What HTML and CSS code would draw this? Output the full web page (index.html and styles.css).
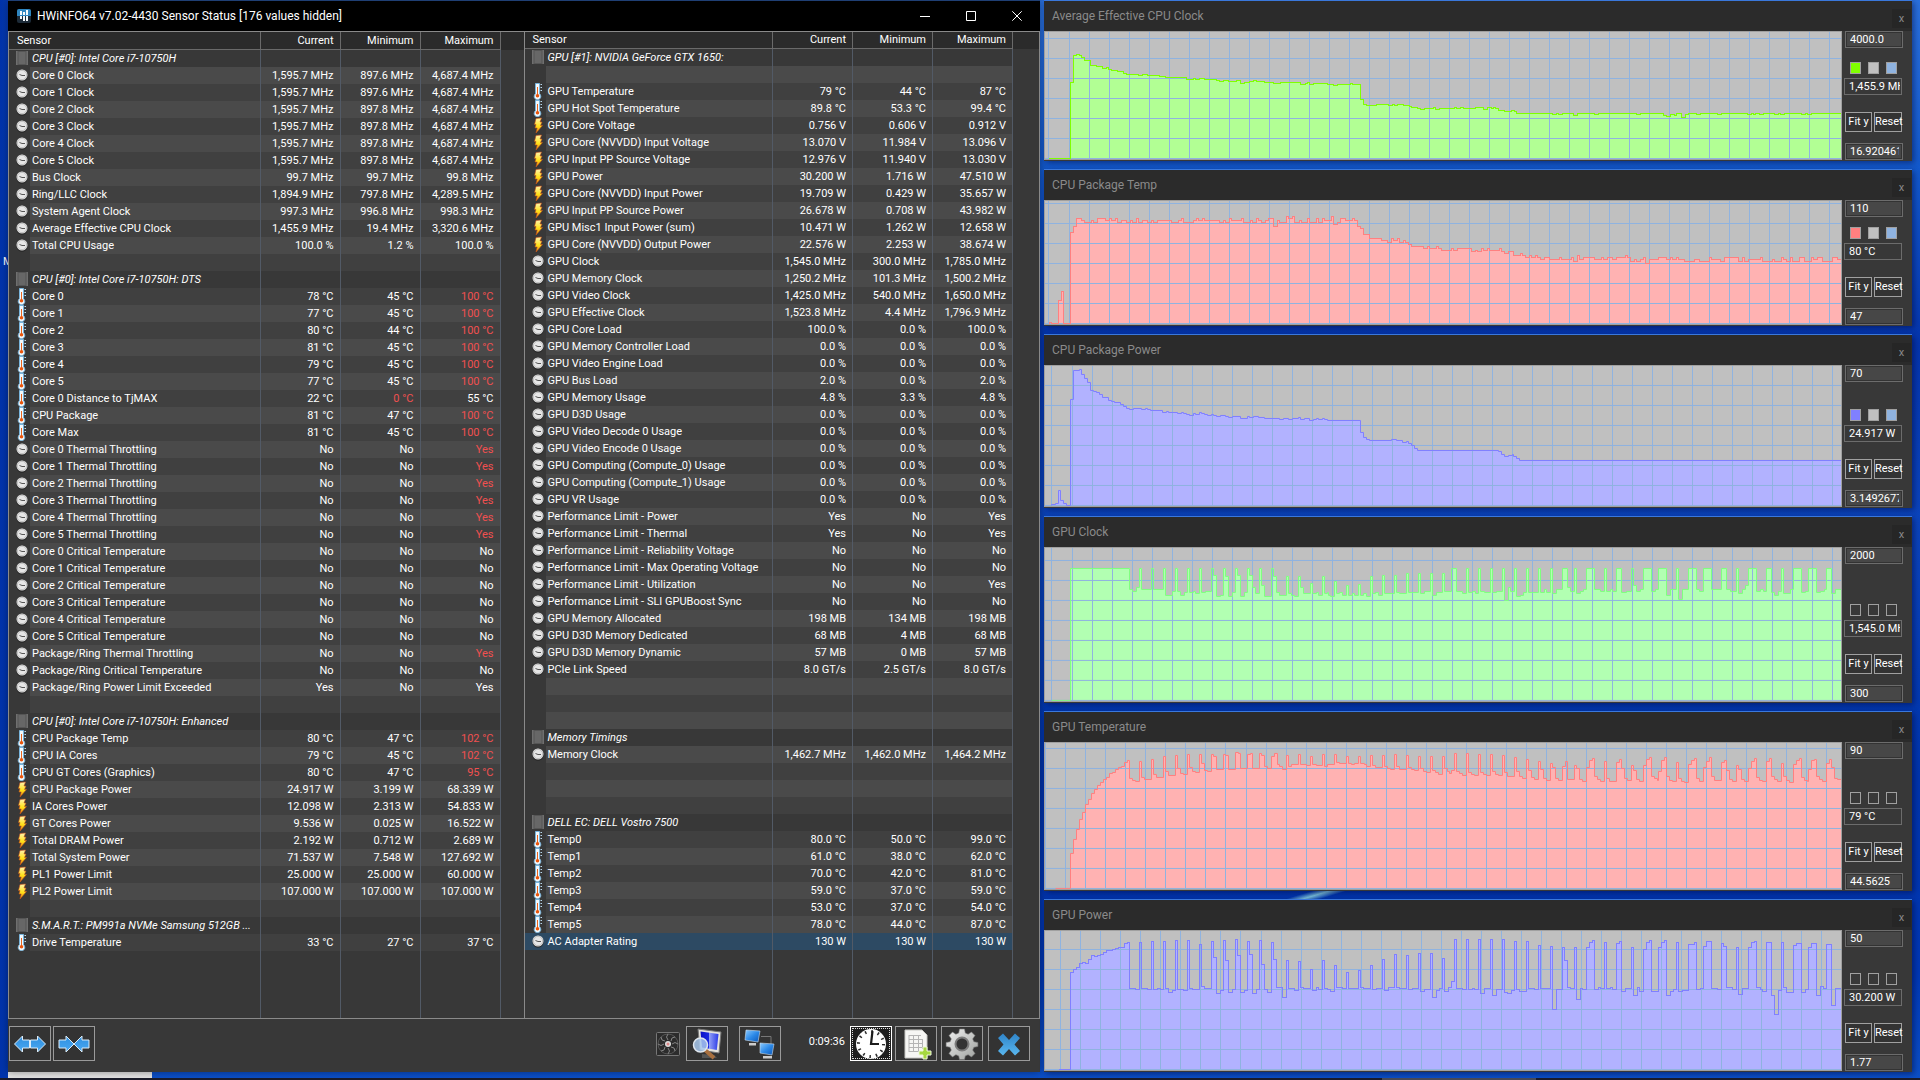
FILE: index.html
```html
<!DOCTYPE html>
<html lang="en">
<head>
<meta charset="utf-8">
<meta name="viewport" content="width=device-width, initial-scale=1">
<title>HWiNFO64 v7.02-4430 Sensor Status</title>
<link rel="stylesheet" href="styles.css">
</head>
<body>
<svg class="sprite" aria-hidden="true">
  <defs>
    <linearGradient id="gArrow" x1="0" y1="0" x2="0" y2="1"><stop offset="0" stop-color="#2f8fe0"/><stop offset="1" stop-color="#4aa9f2"/></linearGradient>
    <linearGradient id="gScreen" x1="0" y1="0" x2="1" y2="0"><stop offset="0" stop-color="#0a10c8"/><stop offset=".45" stop-color="#1a2ae0"/><stop offset=".5" stop-color="#8f9cf5"/><stop offset="1" stop-color="#2a3ae8"/></linearGradient>
    <linearGradient id="gMon" x1="0" y1="0" x2="1" y2="1"><stop offset="0" stop-color="#8ccbff"/><stop offset=".5" stop-color="#2d8ae8"/><stop offset="1" stop-color="#0a55b8"/></linearGradient>
    <linearGradient id="gGear" x1="0" y1="0" x2="1" y2="1"><stop offset="0" stop-color="#f2f2f2"/><stop offset="1" stop-color="#9c9f9c"/></linearGradient>
    <linearGradient id="gBolt" x1="0" y1="0" x2="0" y2="1"><stop offset="0" stop-color="#fff3b0"/><stop offset=".55" stop-color="#ffe21a"/><stop offset="1" stop-color="#f08a10"/></linearGradient>
    <linearGradient id="gX" x1="0" y1="0" x2="0" y2="1"><stop offset="0" stop-color="#2f84c8"/><stop offset="1" stop-color="#5ab8f0"/></linearGradient>
  </defs>
  <symbol id="i-clock" viewBox="0 0 14 17">
    <circle cx="7" cy="9" r="5.500" fill="#1c1c1c"/><circle cx="7" cy="8" r="5.500" fill="#e6e6e6"/><circle cx="7" cy="8" r="4.700" fill="none" stroke="#b4b4b4" stroke-width=".8"/>
    <path d="M4.500 7.500L7 8.500H10" fill="none" stroke="#555" stroke-width="1"/>
  </symbol>
  <symbol id="i-temp" viewBox="0 0 14 17">
    <path d="M4.500.500h4v10.300a3.300 3.300 0 1 1-4 0z" fill="#f2f9fd" stroke="#78b4dc"/>
    <path d="M9.500 1.500h1.500M9.500 4.500h1.500M9.500 7.500h1.500" stroke="#b8d8ee"/>
    <rect x="6" y="4" width="1" height="8" fill="#e8641e"/><circle cx="6.500" cy="12.700" r="1.800" fill="#e8560e"/>
  </symbol>
  <symbol id="i-bolt" viewBox="0 0 14 17">
    <path d="M5 1.500L10.500 1 9 5h2L9.500 8.500h2L5 16l1.200-5H4l1-3.500H3.500z" fill="url(#gBolt)" stroke="#c8501a" stroke-width=".6"/>
  </symbol>
  <symbol id="i-chip" viewBox="0 0 14 17">
    <path d="M2 1.500v13M12 1.500v13" stroke="#a5a5a5" stroke-width="2" stroke-dasharray="1 1"/>
    <rect x="3" y="1.500" width="8" height="13" fill="#676767" stroke="#555"/>
  </symbol>
</svg>
<div class="desktop">
  <span class="desk-label">M</span>
  <main class="windows">
    <section class="hwinfo" aria-label="Sensor status">
      <header class="titlebar">
        <svg class="app-icon" viewBox="0 0 14 14" aria-hidden="true"><rect width="14" height="14" rx="2" fill="#1d2b38"/><path d="M0 2a2 2 0 0 1 2-2h10a2 2 0 0 1 2 2v5H0z" fill="#2f86c0"/><path d="M3 2h2v4H3zM6 3h2v3H6zM9 1h2v5H9zM3 7h2v3H3zM6 7h2v5H6zM9 7h2v5H9z" fill="#f4f8fb"/></svg>
        <h1>HWiNFO64 v7.02-4430 Sensor Status [176 values hidden]</h1>
        <button class="cap" aria-label="Minimize"><svg viewBox="0 0 10 10"><path d="M0 5.500h10"/></svg></button>
        <button class="cap" aria-label="Maximize"><svg viewBox="0 0 10 10"><path d="M.5.500h9v9h-9z"/></svg></button>
        <button class="cap" aria-label="Close"><svg viewBox="0 0 10 10"><path d="M.3.300l9.400 9.400M9.700.300L.3 9.700"/></svg></button>
      </header>
      <div class="panes">
        <div class="pane pane-a"><table id="sensorsA"></table></div>
        <div class="pane pane-b"><table id="sensorsB"></table></div>
      </div>
      <footer class="toolbar">
        <div class="tools near">
          <button aria-label="Widen columns"><svg viewBox="0 0 34 20"><path d="M1.500 10l8-8v4h7v8h-7v4zM32.500 10l-8-8v4h-7v8h7v4z" fill="url(#gArrow)" stroke="#dcecf8"/></svg></button>
          <button aria-label="Narrow columns"><svg viewBox="0 0 34 20"><path d="M17 10L9 2v4H2v8h7v4zM17 10l8-8v4h7v8h-7v4z" fill="url(#gArrow)" stroke="#dcecf8"/></svg></button>
        </div>
        <div class="tools scan">
          <svg class="fan" viewBox="0 0 24 24" aria-label="Fan"><rect x=".5" y=".5" width="23" height="23" rx="1" fill="#2c2c2c" stroke="#777"/><g fill="none" stroke="#858585" stroke-width="1"><circle cx="12" cy="12" r="10" stroke="#555"/><path d="M12 8q-3-3 0-6M15 9q0-4 4-4M16 12q3-3 6 0M15 15q4 0 4 4M12 16q3 3 0 6M9 15q0 4-4 4M8 12q-3 3-6 0M9 9q-4 0-4-4"/></g><circle cx="12" cy="12" r="3" fill="#ddd"/><circle cx="12" cy="12" r="1.500" fill="#d88"/></svg>
          <button aria-label="System summary"><svg viewBox="0 0 34 32"><path d="M8 1l23 3-2 21-19-3z" fill="#e4e2dc" stroke="#777"/><path d="M10.500 3.500l18 2.500-1.700 16-14.800-2.500z" fill="url(#gScreen)"/><path d="M12 26l12 1 3 3H12z" fill="#555"/><path d="M15 22l9 8" stroke="#a87040" stroke-width="4"/><circle cx="10.500" cy="17" r="7" fill="#a8c8ec" fill-opacity=".85" stroke="#dfe6ee" stroke-width="1.500"/></svg></button>
        </div>
        <button aria-label="Remote monitoring"><svg viewBox="0 0 34 32"><path d="M18 8.500h10v8" fill="none" stroke="#777"/><path d="M3 2l14 1-2 11-13-2z" fill="url(#gMon)" stroke="#cde" stroke-width=".6"/><path d="M6 15h7v2.500H6z" fill="#ccc"/><path d="M17 15l14 1-2 11-12-2z" fill="url(#gMon)" stroke="#cde" stroke-width=".6"/><path d="M20 28h9v2.500h-9z" fill="#ccc"/></svg></button>
        <time class="elapsed">0:09:36</time>
        <div class="tools actions">
          <button class="focused" aria-label="Reset clock"><svg viewBox="0 0 34 32"><circle cx="17" cy="16" r="15" fill="#fff"/><circle cx="17" cy="16" r="12.500" fill="none" stroke="#2a2a2a" stroke-width="3" stroke-dasharray="1.500 5.045"/><path d="M18.500 3L17 16h8" fill="none" stroke="#1c1c1c" stroke-width="2.200"/></svg></button>
          <button class="log" aria-label="Start logging"><svg viewBox="0 0 34 32"><path d="M6 2h17l5 5v23H6z" fill="#f6f6f4" stroke="#c8c8c4"/><path d="M10 7.500h12M10 11.500h14M10 15.500h14M10 19.500h14M10 23.500h10M10 7v17M14.500 7v17M19.500 7v17M23.500 11v10" fill="none" stroke="#b4b4b4"/><path d="M24 19h4v4h4v4h-4v4h-4v-4h-4v-4h4z" fill="#a6d840" stroke="#eef8d8"/></svg></button>
          <button class="gearbtn" aria-label="Settings"><svg viewBox="0 0 34 32"><path d="M14.500 1h5l.8 4 2.800 1.200L26.500 4l3.500 3.500-2.300 3.400 1.200 2.800 4 .8v4l-4 .8-1.200 2.800L30 25.500 26.500 29l-3.400-2.300-2.800 1.200-.8 3.600h-5l-.8-3.600-2.800-1.200L7.500 29 4 25.500l2.300-3.400-1.200-2.800-4-.8v-4l4-.8 1.200-2.800L4 7.500 7.500 4l3.400 2.200L13.700 5z" fill="url(#gGear)" stroke="#777" stroke-width=".6"/><circle cx="17" cy="16" r="6.500" fill="#333" stroke="#7c7c7c" stroke-width="2"/></svg></button>
          <button class="exit" aria-label="Close sensors"><svg viewBox="0 0 34 32"><path d="M11 5.500l6 6.500 6-6.500 5 4.500-5.500 6.500L28 23l-5 4.500-6-6.500-6 6.500L6 23l5.500-6.500L6 10z" fill="url(#gX)"/></svg></button>
        </div>
      </footer>
    </section>
    <section class="graphs" id="graphs" aria-label="Graphs"></section>
  </main>
  <div class="peek"></div>
  <div class="taskbar"></div>
</div>
<script src="app.js"></script>
</body>
</html>
```
FILE: styles.css
```css
* { box-sizing: border-box; }
body { margin: 0; background: #0035b0; color: #fff; font-family: Roboto, "Noto Sans", sans-serif; font-size: 11px; line-height: 17px; }
button, input { font: inherit; color: inherit; border-radius: 0; margin: 0; }
.sprite { position: absolute; width: 0; height: 0; }
.desktop {
  position: relative; display: flex; flex-direction: column; height: 100vh; min-height: 700px; overflow: hidden;
  background:
    linear-gradient(163deg, transparent 35%, #7cc4e0 50%, transparent 65%) 1286px 886px / 60px 18px no-repeat,
    linear-gradient(90deg, #0033ac 0%, rgba(0, 51, 172, 0) 3%),
    linear-gradient(180deg, #2a70dd 0, #1258cc 16%, #0434ac 32%, #0b44bc 48%, #0034ac 72%, #0037b4 90%, #0c50c8 100%);
}
.desk-label { position: absolute; left: 3px; top: 253px; z-index: 0; }
.windows { position: relative; z-index: 1; flex: 1; min-height: 0; display: flex; gap: 4px; padding: 0 8px; }

.hwinfo { flex: 1032 1 0; min-width: 0; display: flex; flex-direction: column; background: #383838; border-top: 1px solid #1f3f74; box-shadow: 0 0 8px rgba(0, 0, 0, .4); }
.titlebar { flex: none; height: 30px; display: flex; align-items: center; background: #000; padding-left: 9px; }
.app-icon { width: 14px; height: 14px; margin-right: 6px; }
h1, h2 { margin: 0; font-size: 12px; line-height: 16px; font-weight: 400; white-space: nowrap; }
h1 { flex: 1; }
.cap { width: 46px; height: 30px; padding: 0; border: 0; background: none; display: grid; place-items: center; }
.cap svg { width: 10px; height: 10px; fill: none; stroke: #fff; }

.panes { flex: 1; min-height: 0; display: flex; border: 1px solid #8a8a8a; }
.pane {
  flex: 1 1 0; min-width: 0; overflow: hidden;
  background:
    linear-gradient(#525a66, #525a66) right var(--tail) top / 1px 100% no-repeat,
    linear-gradient(#525a66, #525a66) right calc(var(--tail) + 80px) top / 1px 100% no-repeat,
    linear-gradient(#525a66, #525a66) right calc(var(--tail) + 160px) top / 1px 100% no-repeat,
    linear-gradient(#525a66, #525a66) right calc(var(--tail) + 240px) top / 1px 100% no-repeat,
    #383838;
}
.pane-a { --tail: 23px; --head: 18px; border-right: 1px solid #8a8a8a; }
.pane-b { --tail: 26px; --head: 17px; }
table { width: 100%; table-layout: fixed; border-collapse: separate; border-spacing: 0; }
col.value { width: 80px; }
col.tail { width: var(--tail); }
th, td { height: 17px; padding: 0 6px 0 0; line-height: 17px; font-weight: 400; text-align: right; white-space: nowrap; overflow: hidden; border-right: 1px solid #525a66; }
th:last-child, td:last-child { border-right: 0; padding: 0; }
thead th { height: var(--head); line-height: 16px; background: #2b2b2b; border-bottom: 1px solid #6a6a6a; border-right-color: #6a6a6a; }
thead th:first-child { text-align: left; padding-left: 8px; }
thead th:last-child { border-bottom-color: #2b2b2b; }
tbody th { text-align: left; padding: 0; }
.name { display: flex; }
.name svg { flex: none; width: 14px; height: 17px; margin: 0 1px 0 6px; }
.name i.none { flex: none; width: 21px; }
.name span { flex: 1; min-width: 0; height: 17px; padding-left: 2px; overflow: hidden; text-overflow: ellipsis; }
tr.light td, tr.light .name span { background: #4a4a4a; }
tr.dark td, tr.dark .name span { background: #404040; }
tr td:last-child, tr.light td:last-child, tr.dark td:last-child { background: #383838; }
tr.device .name span { font-style: italic; }
tr.selected th, tr.selected td, tr.selected .name span { background: #2d4a63; }
tr.selected td:last-child { background: #383838; }
.alert { color: #f05050; }

.toolbar { flex: none; height: 53px; display: flex; align-items: flex-start; padding: 7px 10px 0 1px; }
.tools { display: flex; }
.near { gap: 2px; margin-right: auto; }
.scan { align-items: center; gap: 6px; margin-right: 11px; }
.fan { width: 24px; height: 24px; }
.toolbar button { width: 42px; height: 35px; padding: 0; display: grid; place-items: center; background: #333; border: 1px solid #9a9a9a; }
.toolbar button svg { width: 34px; height: 32px; }
.toolbar button.focused { border-color: #fff; outline: 1px dotted #ddd; outline-offset: -3px; background: #1e1e1e; }
.elapsed { width: 69px; padding-right: 5px; text-align: right; line-height: 32px; }
.log { margin-left: 3px; }
.gearbtn { margin-left: 4px; }
.exit { margin-left: 5px; }

.graphs { flex: 868 1 0; min-width: 0; display: flex; flex-direction: column; gap: 8px; }
.graph { flex-basis: 0; flex-shrink: 1; min-height: 0; display: flex; flex-direction: column; background: #383838; border-top: 1px solid #3a78dc; box-shadow: 2px 2px 6px rgba(0, 0, 40, .45); }
.graph header { flex: none; height: 30px; display: flex; align-items: center; justify-content: space-between; padding: 0 1px 0 8px; background: #2b2b2b; color: #8a8a8a; }
.graph header button { width: 19px; height: 19px; margin-top: 4px; padding: 0; border: 0; background: #262626; line-height: 15px; }
.graph-body { flex: 1; min-height: 0; display: flex; padding-bottom: 1px; }
.plot { flex: 1; min-width: 0; height: 100%; background: #c0c0c0; }
.side { flex: none; width: 70px; display: flex; flex-direction: column; padding-left: 3px; }
.side input { flex: none; width: 58px; height: 17px; padding: 0 3px 0 4px; line-height: 13px; background: #474747; border: 1px solid #6c6c6c; outline: 1px solid #333; outline-offset: -2px; }
.side input.now { margin: 4px 0 17px -1px; padding-right: 1px; background: #383838; outline: 0; }
.swatches { display: flex; gap: 7px; margin-top: auto; padding-left: 5px; }
.swatches button { width: 11px; height: 12px; padding: 0; border: 1px solid #a0a0a0; background: transparent; }
.fit { display: flex; gap: 2px; margin-bottom: 11px; }
.fit button { width: 27px; height: 20px; padding: 0; line-height: 16px; text-align: center; white-space: nowrap; background: #333; border: 1px solid #a0a0a0; }
.fit button + button { width: 28px; }

.peek { flex: none; height: 6px; width: 144px; margin-left: 8px; background: #e4e4e4; }
.taskbar { flex: none; height: 2px; background: linear-gradient(90deg, #1b1c2a 72%, #4a4c58 72%, #4a4c58 80%, #1b1c2a 80%); }
```
FILE: app.js
```js
// Sensor rows: icon|name|current|minimum|maximum. "!" marks a value past its limit,
// "g" a device heading, "-" an empty row, "*" the selected row.
const sensorsA = `g|CPU [#0]: Intel Core i7-10750H
c|Core 0 Clock|1,595.7 MHz|897.6 MHz|4,687.4 MHz
c|Core 1 Clock|1,595.7 MHz|897.6 MHz|4,687.4 MHz
c|Core 2 Clock|1,595.7 MHz|897.8 MHz|4,687.4 MHz
c|Core 3 Clock|1,595.7 MHz|897.8 MHz|4,687.4 MHz
c|Core 4 Clock|1,595.7 MHz|897.8 MHz|4,687.4 MHz
c|Core 5 Clock|1,595.7 MHz|897.8 MHz|4,687.4 MHz
c|Bus Clock|99.7 MHz|99.7 MHz|99.8 MHz
c|Ring/LLC Clock|1,894.9 MHz|797.8 MHz|4,289.5 MHz
c|System Agent Clock|997.3 MHz|996.8 MHz|998.3 MHz
c|Average Effective CPU Clock|1,455.9 MHz|19.4 MHz|3,320.6 MHz
c|Total CPU Usage|100.0 %|1.2 %|100.0 %
-
g|CPU [#0]: Intel Core i7-10750H: DTS
t|Core 0|78 °C|45 °C|!100 °C
t|Core 1|77 °C|45 °C|!100 °C
t|Core 2|80 °C|44 °C|!100 °C
t|Core 3|81 °C|45 °C|!100 °C
t|Core 4|79 °C|45 °C|!100 °C
t|Core 5|77 °C|45 °C|!100 °C
t|Core 0 Distance to TjMAX|22 °C|!0 °C|55 °C
t|CPU Package|81 °C|47 °C|!100 °C
t|Core Max|81 °C|45 °C|!100 °C
c|Core 0 Thermal Throttling|No|No|!Yes
c|Core 1 Thermal Throttling|No|No|!Yes
c|Core 2 Thermal Throttling|No|No|!Yes
c|Core 3 Thermal Throttling|No|No|!Yes
c|Core 4 Thermal Throttling|No|No|!Yes
c|Core 5 Thermal Throttling|No|No|!Yes
c|Core 0 Critical Temperature|No|No|No
c|Core 1 Critical Temperature|No|No|No
c|Core 2 Critical Temperature|No|No|No
c|Core 3 Critical Temperature|No|No|No
c|Core 4 Critical Temperature|No|No|No
c|Core 5 Critical Temperature|No|No|No
c|Package/Ring Thermal Throttling|No|No|!Yes
c|Package/Ring Critical Temperature|No|No|No
c|Package/Ring Power Limit Exceeded|Yes|No|Yes
-
g|CPU [#0]: Intel Core i7-10750H: Enhanced
t|CPU Package Temp|80 °C|47 °C|!102 °C
t|CPU IA Cores|79 °C|45 °C|!102 °C
t|CPU GT Cores (Graphics)|80 °C|47 °C|!95 °C
b|CPU Package Power|24.917 W|3.199 W|68.339 W
b|IA Cores Power|12.098 W|2.313 W|54.833 W
b|GT Cores Power|9.536 W|0.025 W|16.522 W
b|Total DRAM Power|2.192 W|0.712 W|2.689 W
b|Total System Power|71.537 W|7.548 W|127.692 W
b|PL1 Power Limit|25.000 W|25.000 W|60.000 W
b|PL2 Power Limit|107.000 W|107.000 W|107.000 W
-
g|S.M.A.R.T.: PM991a NVMe Samsung 512GB ...
t|Drive Temperature|33 °C|27 °C|37 °C`;

const sensorsB = `g|GPU [#1]: NVIDIA GeForce GTX 1650:
-
t|GPU Temperature|79 °C|44 °C|87 °C
t|GPU Hot Spot Temperature|89.8 °C|53.3 °C|99.4 °C
b|GPU Core Voltage|0.756 V|0.606 V|0.912 V
b|GPU Core (NVVDD) Input Voltage|13.070 V|11.984 V|13.096 V
b|GPU Input PP Source Voltage|12.976 V|11.940 V|13.030 V
b|GPU Power|30.200 W|1.716 W|47.510 W
b|GPU Core (NVVDD) Input Power|19.709 W|0.429 W|35.657 W
b|GPU Input PP Source Power|26.678 W|0.708 W|43.982 W
b|GPU Misc1 Input Power (sum)|10.471 W|1.262 W|12.658 W
b|GPU Core (NVVDD) Output Power|22.576 W|2.253 W|38.674 W
c|GPU Clock|1,545.0 MHz|300.0 MHz|1,785.0 MHz
c|GPU Memory Clock|1,250.2 MHz|101.3 MHz|1,500.2 MHz
c|GPU Video Clock|1,425.0 MHz|540.0 MHz|1,650.0 MHz
c|GPU Effective Clock|1,523.8 MHz|4.4 MHz|1,796.9 MHz
c|GPU Core Load|100.0 %|0.0 %|100.0 %
c|GPU Memory Controller Load|0.0 %|0.0 %|0.0 %
c|GPU Video Engine Load|0.0 %|0.0 %|0.0 %
c|GPU Bus Load|2.0 %|0.0 %|2.0 %
c|GPU Memory Usage|4.8 %|3.3 %|4.8 %
c|GPU D3D Usage|0.0 %|0.0 %|0.0 %
c|GPU Video Decode 0 Usage|0.0 %|0.0 %|0.0 %
c|GPU Video Encode 0 Usage|0.0 %|0.0 %|0.0 %
c|GPU Computing (Compute_0) Usage|0.0 %|0.0 %|0.0 %
c|GPU Computing (Compute_1) Usage|0.0 %|0.0 %|0.0 %
c|GPU VR Usage|0.0 %|0.0 %|0.0 %
c|Performance Limit - Power|Yes|No|Yes
c|Performance Limit - Thermal|Yes|No|Yes
c|Performance Limit - Reliability Voltage|No|No|No
c|Performance Limit - Max Operating Voltage|No|No|No
c|Performance Limit - Utilization|No|No|Yes
c|Performance Limit - SLI GPUBoost Sync|No|No|No
c|GPU Memory Allocated|198 MB|134 MB|198 MB
c|GPU D3D Memory Dedicated|68 MB|4 MB|68 MB
c|GPU D3D Memory Dynamic|57 MB|0 MB|57 MB
c|PCIe Link Speed|8.0 GT/s|2.5 GT/s|8.0 GT/s
-
-
-
g|Memory Timings
c|Memory Clock|1,462.7 MHz|1,462.0 MHz|1,464.2 MHz
-
-
-
g|DELL EC: DELL Vostro 7500
t|Temp0|80.0 °C|50.0 °C|99.0 °C
t|Temp1|61.0 °C|38.0 °C|62.0 °C
t|Temp2|70.0 °C|42.0 °C|81.0 °C
t|Temp3|59.0 °C|37.0 °C|59.0 °C
t|Temp4|53.0 °C|37.0 °C|54.0 °C
t|Temp5|78.0 °C|44.0 °C|87.0 °C
*c|AC Adapter Rating|130 W|130 W|130 W`;

const icons = { c: "i-clock", t: "i-temp", b: "i-bolt", g: "i-chip" };

function sensorTable(id, rows) {
  const body = rows.split("\n").map((line, i) => {
    const selected = line[0] === "*";
    const [kind, name = "", ...vals] = (selected ? line.slice(1) : line).split("|");
    const cls = selected ? "selected" : kind === "g" ? "device" : i % 2 ? "light" : "dark";
    const icon = icons[kind] ? `<svg aria-hidden="true"><use href="#${icons[kind]}"/></svg>` : `<i class="none"></i>`;
    const cells = [0, 1, 2].map(n => {
      const v = vals[n] || "";
      return v[0] === "!" ? `<td class="alert">${v.slice(1)}</td>` : `<td>${v}</td>`;
    }).join("");
    return `<tr class="${cls}"><th scope="row"><div class="name">${icon}<span>${name}</span></div></th>${cells}<td></td></tr>`;
  }).join("");
  document.getElementById(id).innerHTML =
    `<colgroup><col><col class="value"><col class="value"><col class="value"><col class="tail"></colgroup>
     <thead><tr><th>Sensor</th><th>Current</th><th>Minimum</th><th>Maximum</th><th></th></tr></thead><tbody>${body}</tbody>`;
}
sensorTable("sensorsA", sensorsA);
sensorTable("sensorsB", sensorsB);

// Traces are step plots: "x y" pairs in thirds of a pixel. The history is stored in two
// halves, the second starting 440px after the first. dy is the top of the plot in that space.
const graphs = [
  { name: "Average Effective CPU Clock", h: 161, dy: 31, gx: 4, wide: 0, gy: 7, base: 158, line: "#80ff00", fill: "#b2ff94",
    max: "4000.0", now: "1,455.9 MHz", min: "16.920461620", swatch: true,
    a: "25 475,92 247,101 166,108 163,117 166,124 172,134 181,152 196,170 199,187 205,198 203,206 209,215 211,232 214,250 220,260 223,296 226,308 223,322 226,358 229,376 233,440 238,460 235,467 238,478 234,494 238,530 241,539 244,550 241,566 244,588 241,602 250,614 247,628 244,640 241,648 244,674 247,700 250,722 247,782 253,795 250,801 247,808 253,820 250,862 253,880 256,893 253,930 250,936 253,962 298,971 313,980 316,1010 313,1044 316,1056 313,1062 316,1073 313,1089 316,1107 319,1115 322,1132 325,1142 328,1154 325,1180 322,1186 328,1198 325,1243 322,1250 325,1262 322,1270 325,1306 322",
    b: "10 328,22 323,34 325,40 322,46 325,55 330,74 334,94 331,102 334,110 340,218 343,230 340,236 343,248 340,280 346,293 340,344 343,356 340,470 343,482 340,550 346,558 349,572 343,584 346,590 340,604 352,617 343,626 340,650 343,662 340,712 343,725 340,802 343,814 340,820 343,826 340,838 343,850 340,883 343,895 340,901 343,914 340,964 343,976 340,982 343,995 340" },
  { name: "CPU Package Temp", h: 157, dy: 200, gx: 4, wide: 0, gy: 3, base: 323, line: "#ff8080", fill: "#ffb2b2",
    max: "110", now: "80 °C", min: "47", swatch: true,
    a: "27 967,35 970,56 901,65 875,71 970,92 697,101 679,110 655,125 661,133 667,154 661,160 667,172 655,197 661,208 655,215 661,226 655,232 667,245 661,260 667,272 661,278 667,290 655,296 667,308 661,322 667,334 661,340 667,352 661,395 667,415 661,424 655,431 667,460 661,469 655,476 661,487 655,494 661,539 667,550 661,556 667,569 655,575 661,604 655,611 667,631 661,637 667,649 655,656 661,664 667,676 661,685 655,700 679,713 661,719 667,740 649,746 655,757 649,764 667,779 661,785 667,802 655,808 667,829 655,836 667,848 655,854 661,874 649,880 673,893 667,902 655,917 661,937 655,944 661,953 679,962 685,971 703,989 715,1024 721,1042 727,1055 715,1061 721,1073 715,1079 727,1090 721,1097 727,1106 733,1115 739,1151 745,1162 739,1169 745,1189 739,1196 745,1204 751,1234 745,1241 751,1252 745,1294 754,1306 751,1312 754",
    b: "4 745,10 751,22 745,28 751,58 745,65 754,74 760,86 754,101 766,121 760,128 766,136 772,148 766,154 772,166 766,173 772,181 778,193 772,208 778,238 772,245 778,275 772,280 784,292 766,298 778,310 772,344 778,364 772,370 778,382 772,397 778,409 772,436 766,443 772,452 784,464 778,470 784,482 778,490 772,497 790,508 778,536 772,560 778,571 772,577 778,589 772,596 778,613 784,643 778,658 784,688 772,694 778,722 784,733 772,775 784,788 772,794 784,806 778,841 772,848 784,877 778,884 784,904 772,911 778,920 784,932 772,937 784,958 772,973 784,994 772,1000 778,1012 772,1027 784,1057 772,1073 778" },
  { name: "CPU Package Power", h: 174, dy: 25, gx: 7, wide: 0, gy: 20, base: 165, line: "#8080ff", fill: "#b2b2ff",
    max: "70", now: "24.917 W", min: "3.1492677870", swatch: true,
    a: "35 493,46 490,55 451,62 481,71 490,80 497,92 178,101 91,118 88,125 103,133 115,143 127,152 151,161 154,170 157,179 163,188 172,206 181,215 184,224 187,242 193,250 199,260 205,269 208,280 205,305 208,316 205,322 208,332 211,367 217,379 214,386 217,412 220,424 217,431 220,440 223,448 226,460 220,467 223,478 217,485 220,494 223,502 226,515 223,521 226,530 229,541 226,556 229,566 232,578 229,602 235,622 229,629 232,640 229,656 232,674 235,718 238,730 235,746 238,757 235,776 232,782 238,793 235,808 241,820 238,829 235,836 238,847 235,854 238,862 241,962 277,971 292,980 298,989 301,1055 298,1070 301,1088 307,1099 304,1106 310,1115 316,1124 325,1133 331",
    b: "55 334,65 343,74 349,86 346,96 343,101 349,110 355,119 361" },
  { name: "GPU Clock", h: 187, dy: 207, gx: 7, wide: 0, gy: 13, base: 360, line: "#80ff80", fill: "#b2ffb2",
    max: "2000", now: "1,545.0 MHz", min: "300",
    a: "35 1081,92 685,269 748,277 754,290 742,298 685,305 748,334 685,340 748,371 685,376 766,397 754,406 685,412 754,421 766,434 757,442 685,448 757,460 754,466 760,478 685,484 757,496 754,514 685,520 706,529 769,542 766,550 685,556 709,565 769,578 757,586 685,592 706,601 769,614 757,622 685,628 706,637 742,646 760,658 685,664 736,673 769,694 685,700 709,709 757,718 766,740 709,746 760,754 766,764 769,776 709,782 742,790 760,812 730,818 760,830 757,836 766,848 709,854 760,862 757,866 766,872 769,884 724,890 760,898 757,908 766,919 736,926 766,937 760,944 766,955 733,962 766,971 760,979 769,991 709,998 760,1006 757,1015 766,1028 706,1034 760,1063 706,1070 757,1078 760,1100 700,1105 757,1135 700,1142 760,1154 754,1171 700,1178 766,1190 757,1207 700,1213 754,1235 685,1250 754,1268 760,1279 685,1286 757,1297 754,1306 760,1315 685",
    b: "2 754,12 757,31 685,38 757,50 754,67 685,74 781,86 742,92 754,103 685,110 769,122 766,131 757,139 685,146 757,175 685,182 757,194 748,200 757,211 685,218 760,230 748,248 685,263 742,272 754,283 685,290 760,302 754,311 748,319 685,344 748,362 754,373 685,380 754,392 748,398 754,409 685,425 757,440 754,454 685,460 736,470 754,482 748,491 685,515 754,526 748,536 685,560 766,572 748,590 685,596 778,608 748,626 685,650 748,659 754,671 685,695 748,725 685,740 748,750 754,769 685,776 760,788 748,796 736,806 685,830 754,842 748,850 754,860 685,874 757,883 766,896 754,904 685,911 760,932 748,941 685,965 757,977 754,986 685,1010 757,1022 754,1032 748,1040 685,1055 760,1067 748" },
  { name: "GPU Temperature", h: 180, dy: 32, gx: 1, wide: 9, gy: 6, base: 178, line: "#ff8080", fill: "#ffb2b2",
    max: "90", now: "79 °C", min: "44.5625",
    a: "46 536,92 430,101 388,110 358,119 328,128 307,137 283,145 268,154 250,164 238,173 226,182 217,190 208,200 202,209 190,218 187,227 178,236 172,245 169,254 157,262 151,269 205,277 211,286 214,298 154,305 202,314 208,335 148,341 193,350 202,371 139,377 184,386 196,407 136,413 175,422 190,431 193,443 133,449 172,458 184,467 187,479 133,485 160,494 181,503 184,515 133,521 139,530 178,551 133,557 136,566 178,587 127,594 130,602 175,623 133,631 130,638 175,658 130,665 136,673 169,683 175,695 139,704 130,711 163,719 169,728 178,740 136,746 169,755 163,776 133,782 163,800 166,812 139,818 163,830 166,848 133,854 169,863 163,884 133,890 157,899 160,920 139,926 160,935 163,944 160,956 139,962 160,974 163,980 169,992 136,998 166,1007 172,1028 136,1034 169,1043 175,1052 178,1064 133,1070 169,1079 178,1100 136,1106 172,1115 178,1124 181,1136 139,1142 175,1151 184,1160 187,1171 139,1178 181,1187 187,1196 193,1208 139,1214 175,1222 184,1228 190,1235 181,1244 130,1250 184,1259 190,1268 196,1280 130,1286 187,1295 193,1304 196,1316 133",
    b: "2 187,10 193,20 196,32 133,38 184,47 193,56 196,68 136,74 187,83 199,104 142,110 184,119 199,128 205,140 148,146 181,155 202,164 208,175 154,182 178,191 205,200 211,212 160,218 172,227 205,236 211,248 169,257 154,263 208,284 166,290 175,299 208,308 214,320 172,329 151,338 145,344 199,353 208,362 214,373 154,380 205,389 214,410 157,419 148,425 175,434 205,443 211,455 166,461 181,470 208,479 214,491 166,500 148,509 142,515 199,524 205,533 211,536 184,545 151,554 142,560 199,569 211,578 214,590 157,596 205,605 214,614 217,626 163,635 151,644 145,650 205,659 214,671 172,680 154,689 142,695 199,704 211,725 157,734 151,740 181,749 208,758 214,769 166,776 178,785 208,794 214,806 175,815 154,824 145,830 202,839 211,848 214,860 154,869 145,875 199,884 208,893 214,905 160,911 199,920 211,929 217,941 163,950 151,959 145,965 202,974 211,983 214,986 178,995 151,1004 148,1010 199,1019 208,1028 214,1040 160,1049 148,1055 172,1064 205,1073 208" },
  { name: "GPU Power", h: 173, dy: 220, gx: 16, wide: 9, gy: 19, base: 359, line: "#8080ff", fill: "#b2b2ff",
    max: "50", now: "30.200 W", min: "1.77",
    a: "55 1078,92 787,101 778,110 772,119 760,128 757,136 760,146 748,154 736,162 739,173 736,182 733,191 727,200 721,218 718,227 715,236 712,254 700,262 697,269 835,287 838,299 697,305 835,323 838,335 694,341 838,352 835,360 838,371 694,377 835,386 847,398 841,407 691,413 838,430 841,443 691,449 835,458 838,479 703,485 829,494 835,515 694,521 742,530 850,542 841,551 691,557 751,566 847,578 838,587 688,593 736,602 847,614 841,623 694,629 733,638 850,650 838,658 691,665 763,674 838,683 847,695 697,701 748,710 832,728 862,740 751,746 835,764 841,776 754,782 832,791 835,812 778,818 841,830 832,836 838,848 751,854 835,863 838,872 844,884 766,890 832,908 835,920 787,926 835,956 781,962 832,970 835,992 766,998 838,1010 835,1028 748,1034 841,1046 832,1064 733,1070 832,1079 835,1100 736,1106 838,1118 835,1136 730,1142 844,1154 838,1172 730,1178 862,1190 841,1199 835,1208 745,1214 844,1226 832,1235 814,1244 688,1250 835,1268 838,1280 688,1286 838,1298 835,1304 838,1316 688",
    b: "2 850,14 835,32 688,38 856,50 838,68 688,74 847,83 850,95 841,104 694,110 838,119 844,140 694,146 835,164 838,176 706,182 835,212 709,218 898,230 838,248 712,254 751,263 832,272 835,284 712,290 868,302 835,308 838,320 712,329 697,338 691,344 838,356 832,362 835,373 697,380 835,392 832,398 838,410 700,419 694,425 844,436 835,454 712,461 856,473 832,479 844,491 718,500 697,509 691,515 844,536 712,545 697,554 691,560 856,572 844,581 838,590 697,596 844,608 841,626 703,644 697,650 838,662 835,671 709,680 694,695 835,713 838,725 700,731 709,740 832,758 838,770 712,776 853,788 835,806 712,815 697,824 694,830 832,842 838,848 844,860 697,875 856,884 913,896 841,905 697,911 832,920 847,941 706,950 700,965 847,977 838,986 712,995 700,1010 856,1022 829,1031 835,1040 703,1055 886,1067 835" }
];

const PLOT_W = 798;

function plot(g) {
  const h = g.h - 32;
  const read = (s, dx) => s.split(",").map(p => {
    const [x, y] = p.split(" ").map(Number);
    return [Math.floor(x / 3) + dx + 0.5, Math.floor(y / 3) - g.dy + 0.5];
  });
  const pts = read(g.a, -4).concat(read(g.b, 436));
  const base = g.base - g.dy + 0.5 - (g.dy < g.base - h - 2 ? g.base - g.dy - (h - 3) : 0);
  let line = `M${pts[0][0]} ${base}V${pts[0][1]}`;
  pts.slice(1).forEach(([x, y]) => { line += `H${x}V${y}`; });
  line += `H${PLOT_W}`;
  let grid = "";
  for (let x = g.gx, i = 0; x < PLOT_W; x += i++ === g.wide ? 21 : 20) grid += `M${x + 0.5} 0V${h}`;
  for (let y = g.gy; y < h; y += 20) grid += `M0 ${y + 0.5}H${PLOT_W}`;
  return `<svg class="plot" viewBox="0 0 ${PLOT_W} ${h}" preserveAspectRatio="none" shape-rendering="crispEdges" role="img" aria-label="${g.name} history">
    <path d="${line}V${base}Z" fill="${g.fill}"/><path d="${grid}" stroke="#8fb3e0"/>
    <path d="${line}" fill="none" stroke="${g.line}"/>
    <rect x=".5" y=".5" width="${PLOT_W - 1}" height="${h - 1}" fill="none" stroke="#a0a0a0"/></svg>`;
}

document.getElementById("graphs").innerHTML = graphs.map(g => {
  const colors = g.swatch ? [g.line, "#c0c0c0", "#8fb3e0"] : ["transparent", "transparent", "transparent"];
  const swatches = ["Line", "Background", "Grid"].map((n, i) =>
    `<button aria-label="${n} color" style="background:${colors[i]}"></button>`).join("");
  return `<article class="graph" style="flex-grow:${g.h}">
    <header><h2>${g.name}</h2><button aria-label="Close ${g.name}">x</button></header>
    <div class="graph-body">${plot(g)}
      <div class="side">
        <input aria-label="Y axis maximum" value="${g.max}">
        <div class="swatches">${swatches}</div>
        <input class="now" aria-label="Current value" readonly value="${g.now}">
        <div class="fit"><button>Fit y</button><button>Reset</button></div>
        <input aria-label="Y axis minimum" value="${g.min}">
      </div></div></article>`;
}).join("");
```
